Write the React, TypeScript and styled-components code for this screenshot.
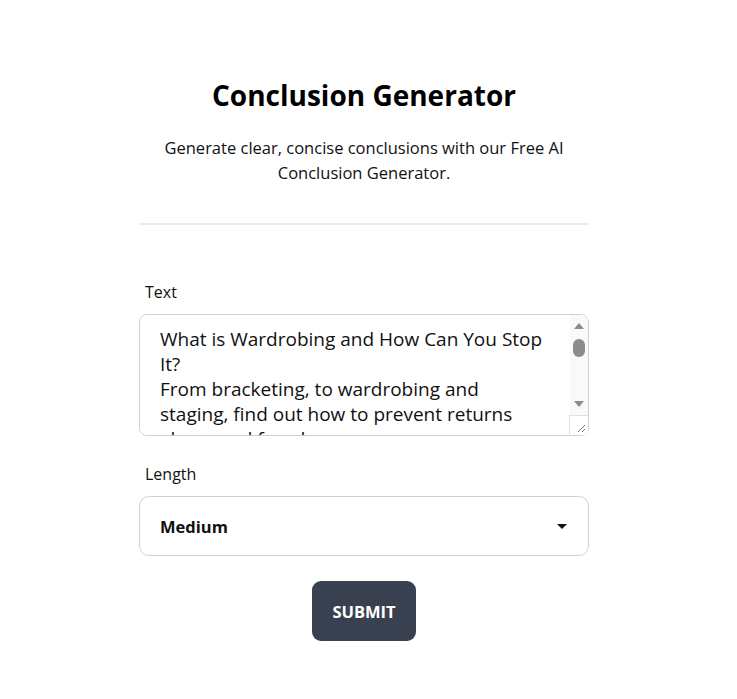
import styled, { createGlobalStyle } from 'styled-components'

const GlobalStyle = createGlobalStyle`
  body {
    margin: 0;
    background: #fff;
    font-family: 'Open Sans', 'Noto Sans', sans-serif;
    color: #111;
  }
`

const Page = styled.main`
  display: flex;
  justify-content: center;
  padding: 75px 9px 40px 0;
`

const Container = styled.div`
  width: 450px;
`

const Header = styled.header`
  text-align: center;
  padding-bottom: 38px;
  border-bottom: 2px solid #ececec;
`

const Title = styled.h1`
  font-size: 28px;
  font-weight: 700;
  line-height: 40px;
  margin: 0 0 20px 0;
  color: #000;
`

const Subtitle = styled.p`
  font-size: 16.5px;
  line-height: 25px;
  margin: 0;
  color: #111;
`

const Form = styled.form`
  display: flex;
  flex-direction: column;
  padding-top: 56px;
`

const Label = styled.label`
  font-size: 16px;
  line-height: 22px;
  padding-left: 6px;
  margin-bottom: 11px;
  color: #111;
`

const TextWrap = styled.div`
  position: relative;
  margin-bottom: 27px;
`

const TextArea = styled.textarea`
  display: block;
  box-sizing: border-box;
  width: 100%;
  height: 122px;
  padding: 12px 41px 0 20px;
  border: 1px solid #cfcfcf;
  border-radius: 8px;
  font-family: inherit;
  font-size: 19px;
  line-height: 25px;
  color: #111;
  resize: none;
  outline: none;
  scrollbar-width: none;
`

/* drawn scrollbar laid over the textarea's right edge */
const ScrollRail = styled.div`
  position: absolute;
  top: 1px;
  right: 1px;
  bottom: 1px;
  width: 18px;
  display: flex;
  flex-direction: column;
  background: #f9f9f9;
  border-top-right-radius: 7px;
  pointer-events: none;
`

const ArrowButton = styled.div<{ $down?: boolean }>`
  height: 22px;
  display: flex;
  align-items: center;
  justify-content: center;

  &::before {
    content: '';
    width: 0;
    height: 0;
    border-left: 5.5px solid transparent;
    border-right: 5.5px solid transparent;
    ${p => (p.$down ? 'border-top: 6px solid #8c8c8c;' : 'border-bottom: 6px solid #8c8c8c;')}
  }
`

const Track = styled.div`
  flex: 1;
  display: flex;
  justify-content: center;
  padding-top: 2px;
`

const Thumb = styled.div`
  width: 12px;
  height: 18px;
  border-radius: 6px;
  background: #8c8c8c;
`

const Resizer = styled.div`
  height: 20px;
  margin-left: -1px;
  background: #fff;
  border-top: 1px solid #dedede;
  border-left: 1px solid #dedede;
  display: flex;
  align-items: flex-end;
  justify-content: flex-end;
  padding: 0 2px 2px 0;
  box-sizing: border-box;
  border-bottom-right-radius: 7px;
`

const SelectWrap = styled.div`
  position: relative;
  margin-bottom: 25px;
`

const Select = styled.select`
  box-sizing: border-box;
  width: 100%;
  height: 60px;
  padding: 0 20px;
  border: 1px solid #d2d2d2;
  border-radius: 10px;
  background: #fff;
  font-family: inherit;
  font-size: 16.5px;
  font-weight: 700;
  color: #111;
  appearance: none;
  outline: none;
`

const Caret = styled.span`
  position: absolute;
  right: 22px;
  top: 28px;
  width: 0;
  height: 0;
  border-left: 5px solid transparent;
  border-right: 5px solid transparent;
  border-top: 5px solid #111;
  pointer-events: none;
`

const SubmitButton = styled.button`
  align-self: center;
  width: 104px;
  height: 60px;
  border: none;
  border-radius: 9px;
  background: #394150;
  color: #fff;
  font-family: inherit;
  font-size: 16.5px;
  font-weight: 700;
  cursor: pointer;
`

const sample = `What is Wardrobing and How Can You Stop It?
From bracketing, to wardrobing and staging, find out how to prevent returns abuse and fraud.

Wardrobing is the practice of buying an item, using it for a short time, and then returning it to the store for a full refund. It is a common form of return fraud that costs retailers billions of dollars every year. Clear return policies, tags that must stay attached and careful return tracking all help to stop it.`

export default function App() {
  return (
    <>
      <GlobalStyle />
      <Page>
        <Container>
          <Header>
            <Title>Conclusion Generator</Title>
            <Subtitle>
              Generate clear, concise conclusions with our Free AI Conclusion Generator.
            </Subtitle>
          </Header>
          <Form onSubmit={e => e.preventDefault()}>
            <Label htmlFor="text">Text</Label>
            <TextWrap>
              <TextArea id="text" defaultValue={sample} />
              <ScrollRail>
                <ArrowButton />
                <Track>
                  <Thumb />
                </Track>
                <ArrowButton $down />
                <Resizer>
                  <svg width="10" height="10" viewBox="0 0 10 10">
                    <path d="M9 2L2 9M9 6L6 9" stroke="#777" strokeWidth="1" fill="none" />
                  </svg>
                </Resizer>
              </ScrollRail>
            </TextWrap>
            <Label htmlFor="length">Length</Label>
            <SelectWrap>
              <Select id="length" defaultValue="medium">
                <option value="short">Short</option>
                <option value="medium">Medium</option>
                <option value="long">Long</option>
              </Select>
              <Caret />
            </SelectWrap>
            <SubmitButton type="submit">SUBMIT</SubmitButton>
          </Form>
        </Container>
      </Page>
    </>
  )
}
